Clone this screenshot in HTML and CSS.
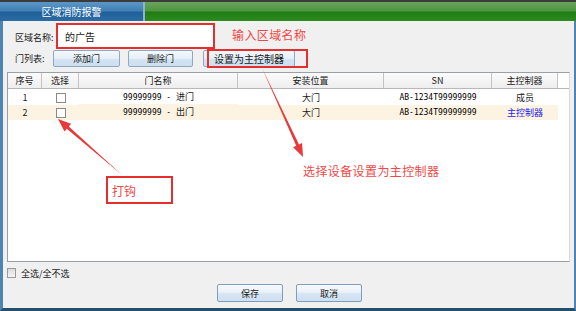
FILE: index.html
```html
<!DOCTYPE html>
<html>
<head>
    <title>区域消防报警</title>
    <meta charset="UTF-8">
    <link rel="stylesheet" href="styles.css">
</head>
<body>
    <div class="window">
        <div class="titlebar">
            <div class="tab">区域消防报警</div>
            <div class="tab-rest"></div>
        </div>

        <div class="panel">
            <div class="row-name">
                <span class="label">区域名称:</span>
                <div class="name-input">的广告</div>
            </div>

            <div class="row-doors">
                <span class="label">门列表:</span>
                <button class="btn btn-add">添加门</button>
                <button class="btn btn-del">删除门</button>
                <button class="btn btn-master">设置为主控制器</button>
            </div>

            <div class="table-box">
                <div class="grid head">
                    <div>序号</div>
                    <div>选择</div>
                    <div>门名称</div>
                    <div>安装位置</div>
                    <div>SN</div>
                    <div>主控制器</div>
                    <div class="filler"></div>
                </div>
                <div class="grid row">
                    <div>1</div>
                    <div><span class="check"></span></div>
                    <div><span class="num">99999999 - </span>进门</div>
                    <div>大门</div>
                    <div class="num">AB-1234T99999999</div>
                    <div>成员</div>
                    <div class="filler"></div>
                </div>
                <div class="grid row odd">
                    <div>2</div>
                    <div><span class="check"></span></div>
                    <div><span class="num">99999999 - </span>出门</div>
                    <div>大门</div>
                    <div class="num">AB-1234T99999999</div>
                    <div class="master">主控制器</div>
                    <div class="filler"></div>
                </div>
            </div>

            <div class="select-all">
                <span class="check-all"></span>
                <span>全选/全不选</span>
            </div>

            <div class="actions">
                <button class="btn btn-big">保存</button>
                <button class="btn btn-big">取消</button>
            </div>
        </div>

        <!-- annotations drawn on top of the screenshot -->
        <div class="note note-name">输入区域名称</div>
        <div class="mark mark-master"></div>
        <div class="mark mark-tick">打钩</div>
        <div class="note note-master">选择设备设置为主控制器</div>
        <svg class="arrows" width="576" height="311" viewBox="0 0 576 311">
            <polygon points="262,68 296.2,145.8 293.1,147.3 303,157 302.1,143.1 299,144.6" fill="#e83a3a"/>
            <polygon points="122,175 68.8,126.5 71.1,123.8 58,119 64.5,131.4 66.8,128.7" fill="#e83a3a"/>
        </svg>
    </div>
</body>
</html>
```

FILE: styles.css
```css
body {
    margin: 0;
    font-family: "Noto Sans CJK SC", "Liberation Sans", sans-serif;
    font-size: 9px;
    color: #1a1a1a;
}

.window {
    position: relative;
    width: 576px;
    height: 311px;
    display: flex;
    flex-direction: column;
    background-color: #F0F0F0;
    overflow: hidden;
}

.titlebar {
    display: flex;
    height: 21px;
    box-sizing: border-box;
    border-top: 2px solid #3c3c3c;
}

.tab {
    width: 143px;
    display: flex;
    align-items: center;
    justify-content: center;
    color: #FFFFFF;
    font-size: 10px;
    background: linear-gradient(#5d97c6, #3f7fb4 48%, #1f6098 52%, #2a6ca4);
    border-right: 2px solid #8fb3cf;
}

.tab-rest {
    flex: 1;
    background: linear-gradient(#6aa35c, #4d9540 48%, #1f7c12 52%, #2e8a20);
}

.panel {
    flex: 1;
    display: flex;
    flex-direction: column;
    border-left: 3px solid #4f84b2;
    border-right: 2px solid #4f84b2;
    border-bottom: 3px solid #23506f;
}

.label {
    display: inline-block;
}

.row-name {
    display: flex;
    align-items: center;
    margin-top: 2px;
    padding-left: 12px;
    height: 26px;
}

.row-name .label {
    width: 41px;
    padding-top: 3px;
}

.name-input {
    width: 159px;
    height: 26px;
    box-sizing: border-box;
    border: 2px solid #e52e2e;
    background-color: #FFFFFF;
    padding-left: 7px;
    display: flex;
    align-items: center;
    font-size: 10px;
}

.row-doors {
    display: flex;
    align-items: center;
    margin-top: 1px;
    padding-left: 12px;
    height: 17px;
}

.row-doors .label {
    width: 38px;
}

.btn {
    height: 17px;
    box-sizing: border-box;
    border: 1px solid #8ea9c6;
    border-radius: 2px;
    background: linear-gradient(#f4f8fc, #e6eff8 50%, #d3e3f2 51%, #cddff0);
    font-family: inherit;
    font-size: 9px;
    color: #1a1a1a;
    padding: 0;
    line-height: 15px;
}

.btn-add {
    width: 67px;
}

.btn-del {
    width: 65px;
    margin-left: 8px;
}

.btn-master {
    width: 92px;
    margin-left: 10px;
    font-size: 10px;
}

.table-box {
    margin: 5px 4px 0 4px;
    height: 190px;
    box-sizing: border-box;
    border: 1px solid #9aa0a8;
    border-right-color: #d8d8d8;
    background-color: #FFFFFF;
}

.grid {
    display: grid;
    grid-template-columns: 34px 37px 159px 146px 108px 66px 1fr;
    height: 15px;
    align-items: center;
    text-align: center;
}

.head {
    height: 15px;
    background: linear-gradient(#fbfbfb, #eeeeee);
    border-bottom: 1px solid #b8b8b8;
}

.head div {
    height: 15px;
    line-height: 15px;
    border-right: 1px solid #c4c4c4;
}

.head .filler {
    border-right: none;
    background-color: #FFFFFF;
}

.row div {
    line-height: 15px;
}

.row.odd div {
    background-color: #fdf3e2;
}

.row.odd .filler {
    background-color: #FFFFFF;
}

.num {
    font-family: "DejaVu Sans Mono", monospace;
    font-size: 8px;
    color: #000000;
}

.master {
    color: #1a1aee;
}

.check {
    display: inline-block;
    width: 8px;
    height: 8px;
    border: 1px solid #8a8a8a;
    background-color: #FFFFFF;
    vertical-align: middle;
}

.select-all {
    display: flex;
    align-items: center;
    margin-top: 3px;
    padding-left: 4px;
    height: 16px;
}

.check-all {
    width: 7px;
    height: 8px;
    border: 1px solid #9a9a9a;
    background: linear-gradient(#dcdcdc, #f6f6f6);
    margin-right: 5px;
}

.actions {
    display: flex;
    margin-top: 3px;
    padding-left: 214px;
    gap: 13px;
}

.btn-big {
    width: 66px;
    height: 18px;
    border-color: #7f9dbd;
    background: linear-gradient(#f6f9fc, #eaf1f8 45%, #d6e5f3 55%, #cfe0f1);
}

.note {
    position: absolute;
    color: #f04848;
    font-size: 12px;
    line-height: 16px;
    letter-spacing: 0.4px;
}

.note-name {
    left: 232px;
    top: 27px;
}

.note-master {
    left: 303px;
    top: 163px;
}

.mark {
    position: absolute;
    box-sizing: border-box;
    border: 2px solid #e52e2e;
}

.mark-master {
    left: 207px;
    top: 49px;
    width: 101px;
    height: 19px;
}

.mark-tick {
    left: 106px;
    top: 176px;
    width: 67px;
    height: 28px;
    padding-left: 4px;
    display: flex;
    align-items: center;
    color: #f04848;
    font-size: 12px;
}

.arrows {
    position: absolute;
    left: 0;
    top: 0;
}
```
